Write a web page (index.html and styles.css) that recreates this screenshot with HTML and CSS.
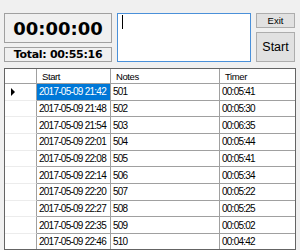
FILE: index.html
```html
<!DOCTYPE html>
<html lang="en">
<head>
  <meta charset="UTF-8">
  <meta name="viewport" content="width=device-width, initial-scale=1.0">
  <title>Timer</title>
  <link rel="stylesheet" href="styles.css">
</head>
<body>
  <div class="top">
    <div class="clock">
      <div class="elapsed">00:00:00</div>
      <div class="total">Total: 00:55:16</div>
    </div>
    <div class="noteBox"><span class="caret"></span></div>
    <div class="actions">
      <button class="exit" type="button">Exit</button>
      <button class="start" type="button">Start</button>
    </div>
  </div>

  <div class="grid">
    <div class="cell corner"></div>
    <div class="cell head">Start</div>
    <div class="cell head">Notes</div>
    <div class="cell head last">Timer</div>

    <div class="cell rowhead"><span class="arrow"></span></div>
    <div class="cell selected">2017-05-09 21:42</div>
    <div class="cell">501</div>
    <div class="cell last">00:05:41</div>

    <div class="cell rowhead"></div>
    <div class="cell">2017-05-09 21:48</div>
    <div class="cell">502</div>
    <div class="cell last">00:05:30</div>

    <div class="cell rowhead"></div>
    <div class="cell">2017-05-09 21:54</div>
    <div class="cell">503</div>
    <div class="cell last">00:06:35</div>

    <div class="cell rowhead"></div>
    <div class="cell">2017-05-09 22:01</div>
    <div class="cell">504</div>
    <div class="cell last">00:05:44</div>

    <div class="cell rowhead"></div>
    <div class="cell">2017-05-09 22:08</div>
    <div class="cell">505</div>
    <div class="cell last">00:05:41</div>

    <div class="cell rowhead"></div>
    <div class="cell">2017-05-09 22:14</div>
    <div class="cell">506</div>
    <div class="cell last">00:05:34</div>

    <div class="cell rowhead"></div>
    <div class="cell">2017-05-09 22:20</div>
    <div class="cell">507</div>
    <div class="cell last">00:05:22</div>

    <div class="cell rowhead"></div>
    <div class="cell">2017-05-09 22:27</div>
    <div class="cell">508</div>
    <div class="cell last">00:05:25</div>

    <div class="cell rowhead"></div>
    <div class="cell">2017-05-09 22:35</div>
    <div class="cell">509</div>
    <div class="cell last">00:05:02</div>

    <div class="cell rowhead"></div>
    <div class="cell">2017-05-09 22:46</div>
    <div class="cell">510</div>
    <div class="cell last">00:04:42</div>
  </div>
</body>
</html>
```

FILE: styles.css
```css
body {
  margin: 0;
  width: 300px;
  height: 250px;
  overflow: hidden;
  background-color: #f0f0f0;
  font-family: 'Liberation Sans', Arial, sans-serif;
  color: #000;
}

.top {
  display: flex;
  padding: 13px 0 0 4px;
  height: 49px;
}

.clock {
  width: 108px;
  display: flex;
  flex-direction: column;
  gap: 4px;
}

.elapsed,
.total {
  box-sizing: border-box;
  border: 1px solid #a0a0a0;
  display: flex;
  align-items: center;
  justify-content: center;
  font-family: 'DejaVu Sans', sans-serif;
  font-weight: bold;
}

.elapsed {
  height: 30px;
  font-size: 18px;
}

.total {
  height: 15px;
  font-size: 11px;
  letter-spacing: -0.3px;
}

.noteBox {
  box-sizing: border-box;
  margin-left: 5px;
  width: 134px;
  height: 49px;
  border: 1px solid #4a90d9;
  background-color: #fff;
  padding: 1px 0 0 4px;
}

.caret {
  display: block;
  width: 1px;
  height: 14px;
  background-color: #000;
}

.actions {
  margin-left: 5px;
  width: 39px;
  display: flex;
  flex-direction: column;
  gap: 4px;
}

button {
  box-sizing: border-box;
  border: 1px solid #adadad;
  background-color: #e1e1e1;
  padding: 0;
  font-family: 'Liberation Sans', Arial, sans-serif;
  color: #000;
}

.exit {
  height: 15px;
  font-size: 9.5px;
}

.start {
  height: 30px;
  font-size: 12.5px;
}

.grid {
  box-sizing: border-box;
  margin: 6px 4px 0;
  height: 182px;
  border: 1px solid #646464;
  background-color: #fff;
  display: grid;
  grid-template-columns: 32px 74px 109px 1fr;
  grid-template-rows: 15px;
  grid-auto-rows: 16.67px;
  overflow: hidden;
}

.cell {
  box-sizing: border-box;
  border-right: 1px solid #a0a0a0;
  border-bottom: 1px solid #a0a0a0;
  display: flex;
  align-items: center;
  padding-left: 2px;
  font-size: 10px;
  letter-spacing: -0.75px;
  white-space: nowrap;
  overflow: hidden;
}

.cell.last {
  border-right: none;
}

.head {
  padding-left: 5px;
  font-size: 9.5px;
  letter-spacing: -0.4px;
}

.rowhead {
  border-bottom-color: #ececec;
  padding-left: 6px;
}

.arrow {
  width: 0;
  height: 0;
  border-left: 4px solid #000;
  border-top: 4px solid transparent;
  border-bottom: 4px solid transparent;
}

.selected {
  background-color: #0078d7;
  color: #fff;
}
```
